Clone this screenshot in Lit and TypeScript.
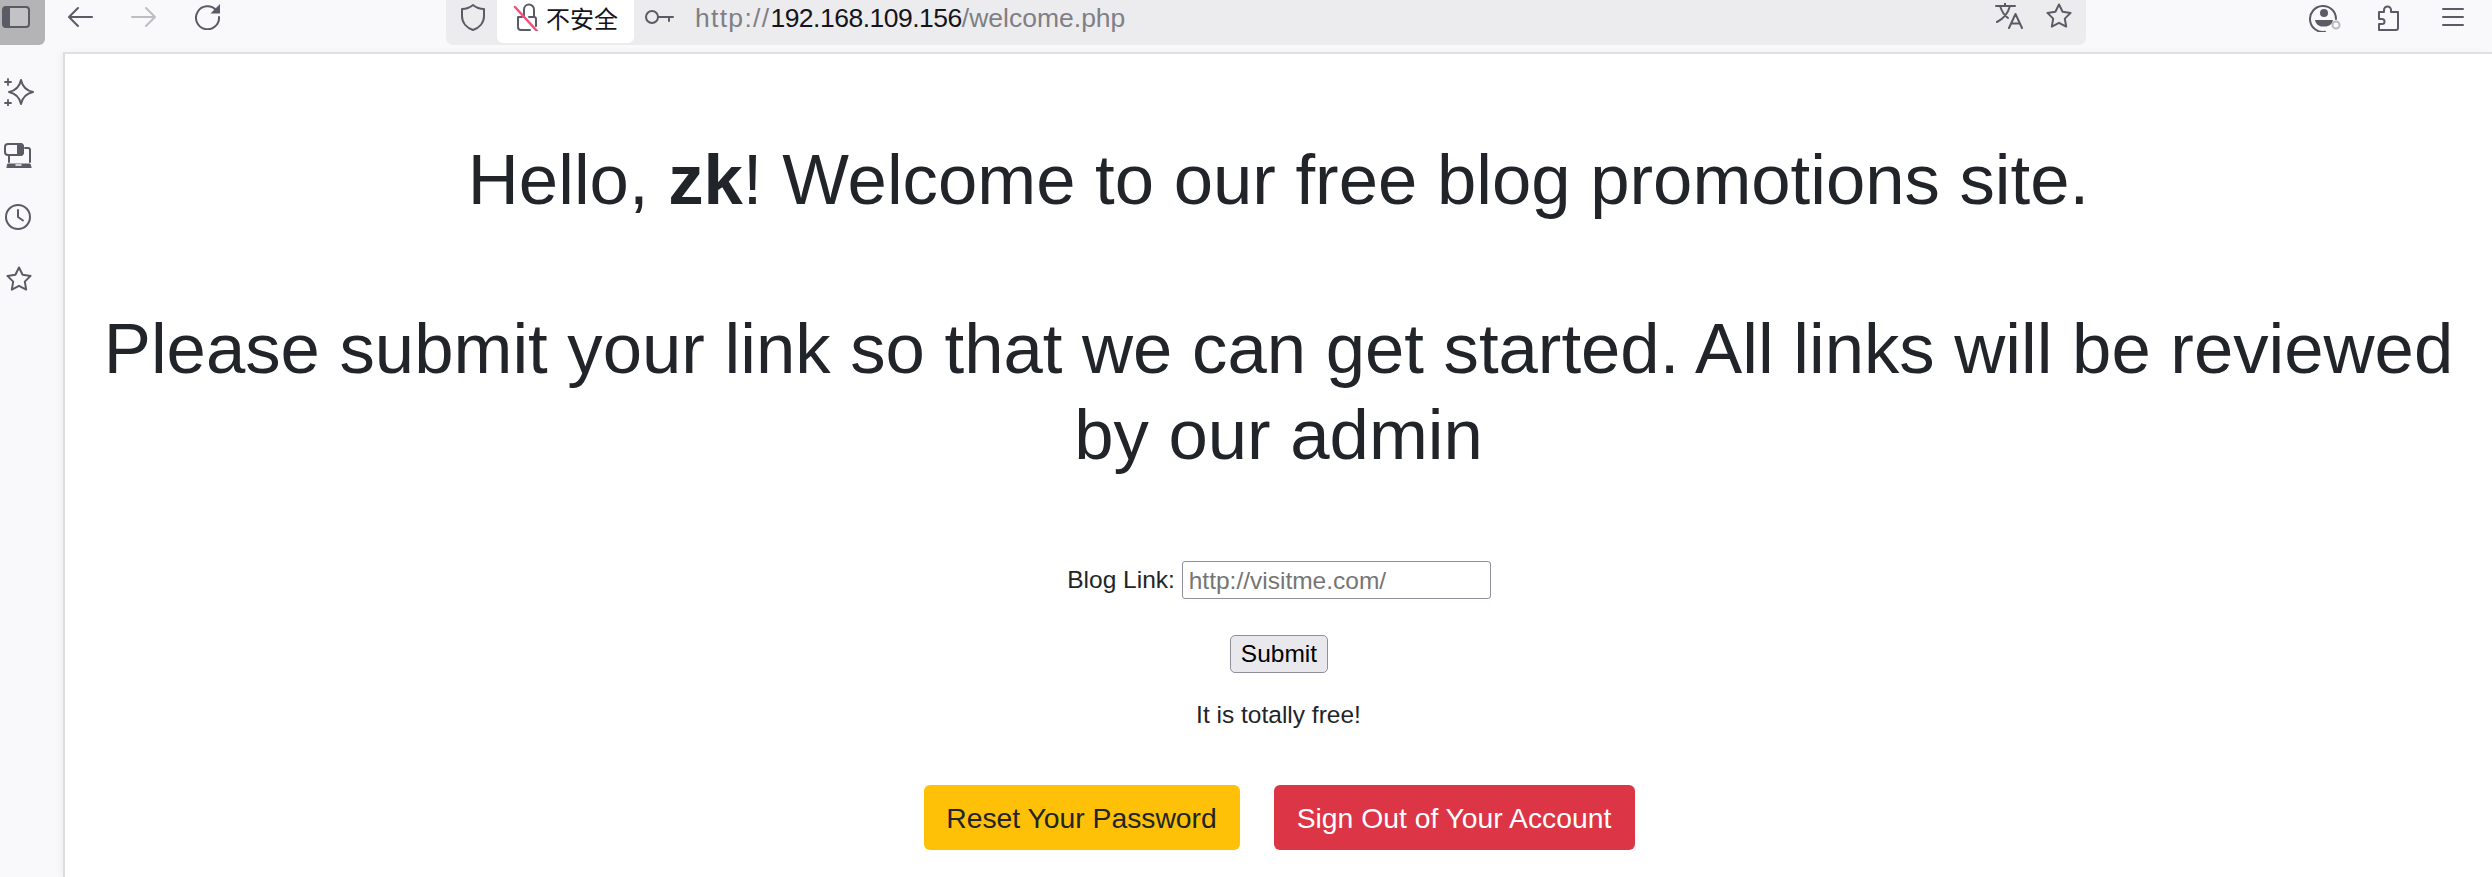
import { LitElement, html, css, svg } from "lit";
import { customElement } from "lit/decorators.js";

const ic = (w: number, h: number, body: unknown, cls = "", vb = "") =>
  html`<svg class="ic ${cls}" width=${w} height=${h} viewBox=${vb || `0 0 ${w} ${h}`} fill="none" stroke="currentColor" stroke-width="2" stroke-linecap="round" stroke-linejoin="round">${body}</svg>`;

const star = svg`<path d="M14 1.500l3.600 7.300 8 1.100-5.800 5.700 1.400 8-7.200-3.800-7.200 3.800 1.400-8-5.800-5.700 8-1.100z"/>`;

@customElement("app-root")
export class AppRoot extends LitElement {
  static styles = css`
    :host { display: block; width: 2492px; height: 877px; overflow: hidden; background: #f9f9fb; font-family: "Liberation Sans", Arial, sans-serif; color: #212529; }
    .toolbar { height: 52px; display: flex; align-items: flex-start; box-sizing: border-box; color: #5b5b66; }
    .tab-btn { width: 45px; height: 45px; background: #b4b4b6; border-bottom-right-radius: 6px; padding: 6px 0 0 2px; box-sizing: border-box; flex: none; }
    .ic { display: block; flex: none; }
    .nav { display: flex; gap: 38px; margin-left: 22px; margin-top: 4px; flex: none; }
    .off { color: #bdbdc2; }
    .urlbar { margin-left: 225px; width: 1640px; height: 45px; flex: none; background: #ececee; border-radius: 0 0 7px 7px; display: flex; align-items: flex-start; box-sizing: border-box; padding-left: 14px; }
    .m3 { margin-top: 3px; }
    .secure { margin-left: 11px; height: 43px; width: 137px; background: #fff; border-radius: 0 0 6px 6px; display: flex; align-items: flex-start; padding-left: 16px; box-sizing: border-box; gap: 7px; flex: none; }
    .secure span { font: 24px/36px "Noto Sans CJK SC", sans-serif; color: #15141a; white-space: nowrap; }
    .key { margin-left: 10px; margin-top: 10px; }
    .url { margin-left: 21px; font-size: 26.500px; line-height: 36px; color: #7f7f85; white-space: nowrap; flex: 1; }
    .url i { font-style: normal; letter-spacing: 1.300px; }
    .url b { font-weight: 400; color: #15141a; letter-spacing: -0.500px; }
    .url-end { display: flex; gap: 22px; margin-right: 13px; margin-top: 3px; }
    .right { display: flex; gap: 32px; margin-left: 223px; margin-top: 2px; }
    .menu { margin-left: 8px; margin-top: 5px; }
    .body { display: flex; height: 825px; }
    .side { width: 63px; flex: none; display: flex; flex-direction: column; gap: 34px; padding: 26px 0 0 4px; box-sizing: border-box; color: #5b5b66; }
    .page { flex: 1; background: #fff; border-top: 2px solid #e0e0e2; border-left: 2px solid #dcdcde; box-shadow: -3px 0 6px rgba(0,0,0,.04); text-align: center; padding: 83px 16px 0; box-sizing: border-box; }
    h1 { margin: 0; font-weight: 400; font-size: 70.700px; line-height: 86px; }
    h1 + h1 { margin-top: 83px; }
    form { margin-top: 81px; font-size: 24.500px; line-height: 38px; padding-left: 1px; }
    .label { vertical-align: -2px; }
    input { width: 309px; height: 38px; box-sizing: border-box; border: 1px solid #8f8f9d; border-radius: 3px; font: 24.500px "Liberation Sans", sans-serif; padding: 3px 6px 0; vertical-align: middle; }
    input::placeholder { color: #757575; }
    .sub { display: inline-block; margin-top: 36px; }
    .sub button { width: 98px; height: 38px; padding: 0; box-sizing: border-box; background: #e9e9ed; border: 1px solid #8f8f9d; border-radius: 5px; font: 24.500px "Liberation Sans", sans-serif; color: #000; }
    .free { margin: 23px 0 0; font-size: 24.500px; line-height: 38px; }
    .actions { display: flex; justify-content: center; gap: 34px; margin-top: 51px; padding-left: 1px; }
    .btn { height: 65px; padding-top: 2px; display: flex; align-items: center; justify-content: center; border-radius: 6px; font-size: 28.300px; box-sizing: border-box; white-space: nowrap; }
    .warn { width: 316px; background: #ffc107; color: #212529; }
    .danger { width: 361px; background: #dc3545; color: #fff; }
  `;

  render() {
    return html`
      <div class="toolbar">
        <div class="tab-btn">
          <svg class="ic" width="28" height="22" viewBox="0 0 28 22"><rect x="1" y="1" width="26" height="20" rx="3" fill="#c3c3c6" stroke="#5b5b66" stroke-width="2"/><path d="M1 4a3 3 0 0 1 3-3h4v20H4a3 3 0 0 1-3-3z" fill="#5b5b66"/></svg>
        </div>
        <div class="nav">
          ${ic(26, 26, svg`<path d="M25 13H2M11 4l-9 9 9 9"/>`)}
          ${ic(26, 26, svg`<path d="M1 13h23M15 4l9 9-9 9"/>`, "off")}
          ${ic(26, 26, svg`<path d="M21 6A11.500 11.500 0 1 0 24 13"/><path d="M25 0v9.500h-9.500z" fill="currentColor" stroke="none"/>`)}
        </div>
        <div class="urlbar">
          ${ic(26, 28, svg`<path d="M13 2c3 2.500 7 4 11 4v7c0 7-5 12-11 14C7 25 2 20 2 13V6c4 0 8-1.500 11-4z"/>`, "m3")}
          <div class="secure">
            <svg class="ic m3" width="26" height="28" viewBox="0 0 26 28" fill="none" stroke-width="2" stroke-linecap="round" stroke-linejoin="round">
              <path d="M11 14V6.500a5 5 0 0 1 10 0V14M9 14H5v10a3 3 0 0 0 3 3h9" stroke="#5b5b66"/>
              <path d="M16 14h5a2 2 0 0 1 2 2v7" stroke="#5b5b66"/>
              <path d="M2 4l22 24" stroke="#f0517a" stroke-width="2.500"/>
            </svg>
            <span>不安全</span>
          </div>
          ${ic(30, 14, svg`<circle cx="8" cy="7" r="6"/><path d="M14 7h15M25 7v4"/>`, "key")}
          <div class="url"><i>http://</i><b>192.168.109.156</b>/welcome.php</div>
          <div class="url-end">
            ${ic(28, 26, svg`<path d="M1 3h19M10 0v3M15 3c-2 7-7 13-13 16M5 3c2 6 5 10 8 12M14 25l6.500-14L27 25M16 20.500h9"/>`)}
            ${ic(28, 26, star)}
          </div>
        </div>
        <div class="right">
          ${ic(34, 30, svg`<path d="M27 17a13 13 0 1 0-11 12.800"/><circle cx="15" cy="11" r="4" fill="currentColor" stroke="none"/><path d="M6 18h18a8 8 0 0 1-7 6.500h-5A8 8 0 0 1 6 18z" fill="currentColor" stroke="none"/><circle cx="27" cy="23" r="3.500" stroke="#b9b9bf"/>`)}
          ${ic(26, 32, svg`<path d="M4 28h17a2 2 0 0 0 2-2V10h-7V8a3.500 3.500 0 0 0-7 0v2H4v7h3a2.500 2.500 0 0 1 0 5H4v6z"/>`)}
          ${ic(24, 20, svg`<path d="M2 2h20M2 10h20M2 18h20"/>`, "menu")}
        </div>
      </div>
      <div class="body">
        <div class="side">
          ${ic(30, 28, svg`<path d="M17 2c1.500 7 5 10.500 12 12-7 1.500-10.500 5-12 12-1.500-7-5-10.500-12-12 7-1.500 10.500-5 12-12z"/><path d="M4 1v6M1 4h6M4 22v6M1 25h6" stroke-width="1.800"/>`)}
          ${ic(30, 28, svg`<rect x="1" y="2" width="18" height="11" rx="3"/><path d="M14 2h2a3 3 0 0 1 3 3v5a3 3 0 0 1-3 3h-2z" fill="currentColor"/><path d="M21 6h3a2 2 0 0 1 2 2v12M5 13v7"/><path d="M4 22h22l1 3v1H3v-1z" fill="currentColor" stroke-width="1"/><path d="M12 23h5" stroke="#f9f9fb" stroke-width="1.500"/>`, "", "0 -2 30 28")}
          ${ic(30, 28, svg`<circle cx="14" cy="15" r="12"/><path d="M14 8v7l5 3.500"/>`)}
          ${ic(30, 28, star, "", "-1 -2 30 28")}
        </div>
        <div class="page">
          <h1>Hello, <b>zk</b>! Welcome to our free blog promotions site.</h1>
          <h1>Please submit your link so that we can get started. All links will be reviewed by our admin</h1>
          <form>
            <div><span class="label">Blog Link:</span> <input placeholder="http://visitme.com/"></div>
            <div class="sub"><button type="button">Submit</button></div>
          </form>
          <p class="free">It is totally free!</p>
          <div class="actions">
            <a class="btn warn">Reset Your Password</a>
            <a class="btn danger">Sign Out of Your Account</a>
          </div>
        </div>
      </div>
    `;
  }
}
